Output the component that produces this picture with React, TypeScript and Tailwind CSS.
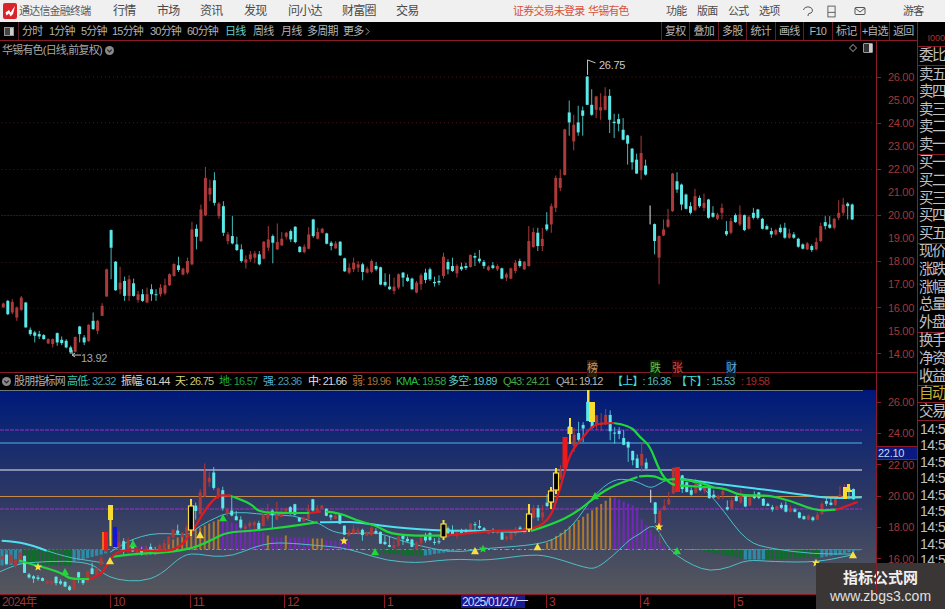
import React from "react";

type Candle = [number, number, number, number, number]; // color (0 red, 1 cyan), wick top, body top, body bottom, wick bottom

// values read at 3x from the reference
const seg1: Candle[] = [
  [0,730,733,745,745],[1,722,725,765,768],[0,720,728,760,765],[0,742,745,775,785],[0,710,715,752,755],[1,728,730,805,805],
  [1,805,812,825,830],[1,815,820,830,850],[1,815,825,832,840],[1,825,828,840,842],[0,838,840,853,855],[0,838,840,855,865],
  [1,820,822,850,860],[1,832,842,852,858],[1,840,845,865,868],[1,860,865,880,885],[0,832,834,878,880],[1,800,802,825,850],
  [1,828,835,850,858],[0,795,797,846,848],[1,760,785,810,812],[0,782,785,815,825],[0,732,740,770,770],[0,628,630,712,712],
  [1,510,512,565,660],[1,605,607,693,695],[0,622,670,690,705],[1,652,665,710,725],[0,648,660,710,725],[1,658,672,710,712],
  [0,695,705,722,730],[1,690,705,725,728],[0,685,705,730,730],[1,675,690,705,725],[1,690,705,708,725],[0,675,685,705,712],
  [0,658,678,702,708],[0,642,645,678,680],[0,612,614,650,652],[1,592,618,632,638],[0,625,628,646,648],[0,595,605,640,645],
  [0,487,510,615,618],[1,495,508,532,570],[0,435,450,545,548],[0,322,355,468,470],[0,360,385,405,425],[1,338,362,430,438],
  [0,428,432,470,478],[1,425,440,520,530],[0,518,525,545,555],[1,470,530,552,555],[1,532,555,572,575],[1,555,570,605,610],
  [0,588,600,610,628],[0,575,585,600,608],[0,575,582,595,612],[1,575,585,615,618],[0,545,547,598,600],[0,500,540,565,575],
  [1,525,530,550,612],[0,492,548,570,572],[0,518,538,558,560],[0,518,520,532,540],[1,510,515,540,548],[1,500,502,548,552],
];
const seg2: Candle[] = [
  [1,590,592,608,610],[0,585,592,608,612],[0,533,555,598,600],[1,508,510,560,565],[0,535,548,568,570],[0,535,538,550,552],
  [1,550,552,583,585],[1,575,580,590,603],[0,575,582,597,598],[1,575,577,618,620],[1,625,627,666,668],[0,642,655,670,675],
  [0,625,640,660,668],[0,635,645,655,668],[1,640,645,668,693],[0,652,658,670,672],[0,630,635,668,672],[1,638,650,660,665],
  [1,652,654,706,708],[1,672,698,708,712],[1,675,712,720,722],[0,685,712,725,735],[0,672,675,715,720],[1,668,670,685,712],
  [1,675,685,695,698],[1,685,688,720,722],[0,695,700,730,732],[0,672,678,705,722],[1,658,670,692,702],[1,655,660,690,695],
  [1,682,698,702,712],[1,678,695,700,708],[0,610,622,680,688],[1,630,638,660,675],[1,625,650,665,668],[0,645,650,672,685],
  [1,640,652,660,665],[1,640,650,656,662],[0,615,617,653,655],[1,610,620,625,650],[1,602,628,636,642],[1,632,638,650,658],
  [0,648,652,662,665],[1,638,648,656,660],[0,645,650,660,665],[1,655,657,688,690],[0,670,675,685,695],[0,655,657,688,690],
  [0,632,640,665,672],[1,628,635,650,655],[0,635,637,660,662],[0,530,575,650,652],[0,535,548,593,595],[1,535,550,590,605],
  [0,535,568,590,605],[1,488,525,540,545],[0,462,470,525,550],[0,378,385,475,488],[0,360,385,415,425],[0,237,239,376,378],
  [1,152,188,218,258],[0,195,225,275,302],[1,168,218,248,258],[1,170,182,198,258],
];
const seg3: Candle[] = [
  [1,78,80,165,165],[1,118,165,195,198],[0,138,140,180,205],[0,130,172,182,210],[0,112,138,180,182],[1,118,138,210,250],
  [1,192,216,220,265],[1,192,208,222,245],[1,205,240,270,272],[1,255,257,282,345],[1,295,297,338,360],[1,312,330,372,372],
  [0,258,310,362,390],[1,330,348,375,378],[2,468,470,525,525],[1,522,524,575,615],[0,558,560,625,705],[0,510,540,558,560],
  [0,478,510,532,535],[0,370,372,485,487],[1,368,395,420,430],[1,402,405,465,482],[1,432,435,478,480],[1,458,470,490,495],
  [0,418,440,482,485],[1,438,445,470,475],[0,432,460,475,485],[1,448,450,505,508],[1,470,490,502,505],[0,490,495,508,512],
  [0,462,475,490,510],[1,515,545,555,560],[0,505,515,550,555],[1,492,497,518,520],[0,468,495,525,530],[1,495,497,542,545],
  [0,498,502,538,540],[1,475,490,505,510],[1,478,480,505,510],[1,505,508,538,540],[1,525,530,540,540],[1,535,545,555,565],
  [0,538,542,555,558],[1,525,535,548,552],[1,520,535,565,568],[0,538,552,565,568],[1,548,555,565,568],[1,565,568,592,595],
  [1,582,585,598,600],[0,578,582,600,602],[1,585,590,602,608],[0,565,578,600,603],[0,520,530,575,578],[1,500,518,530,540],
  [1,500,525,535,538],[0,505,508,535,540],[0,452,490,505,512],[0,445,465,490,498],[1,458,462,470,510],[1,462,465,510,512],
];

const toReal = (seg: Candle[], base: number): Candle[] =>
  seg.map(([c, a, b, d, e]) => [c, base + a / 3, base + b / 3, base + d / 3, base + e / 3]);

const candles = [...toReal(seg1, 60), ...toReal(seg2, 50), ...toReal(seg3, 50)];
const cx = (i: number) => 2 + i * 4.505;
const lower = (y: number) => 403 + (y - 77) * 0.68;

type P = [number, number];
const z = (off: number, pts: P[]): P[] => pts.map(([x, y]) => [off + x / 3, 390 + y / 3]);

const smooth = (pts: P[]) => {
  let d = `M${pts[0][0].toFixed(1)} ${pts[0][1].toFixed(1)}`;
  for (let i = 1; i < pts.length - 1; i++) {
    const mx = (pts[i][0] + pts[i + 1][0]) / 2;
    const my = (pts[i][1] + pts[i + 1][1]) / 2;
    d += ` Q${pts[i][0].toFixed(1)} ${pts[i][1].toFixed(1)} ${mx.toFixed(1)} ${my.toFixed(1)}`;
  }
  const last = pts[pts.length - 1];
  return d + ` L${last[0].toFixed(1)} ${last[1].toFixed(1)}`;
};

const thinLines: P[][] = [
  z(0, [[140,485],[200,505],[270,515],[310,522]]),
  [
    ...z(0, [[330,490],[370,465],[400,450],[450,435],[500,433],[550,438],[570,435],[600,410],[650,385],[680,372],[740,370],[800,378],[880,378],[950,402]]),
    ...z(320, [[0,405],[50,435],[130,432],[180,432],[250,458],[350,482],[420,490],[500,478],[620,470],[700,455],[760,410],[820,320],[880,270],[930,272]]),
    ...z(640, [[0,282],[35,300],[70,275],[120,265],[180,285],[240,350],[320,460],[400,480],[520,495],[640,495]]),
  ],
  [
    ...z(0, [[0,548],[50,525],[100,520],[200,515],[280,525],[310,555],[350,572],[420,578],[480,560],[550,495],[600,495],[640,503],[700,500],[760,475],[810,462],[860,462],[900,465],[960,470]]),
    ...z(320, [[60,475],[120,490],[200,515],[290,522],[350,515],[420,510],[500,515],[640,495],[700,505],[800,538],[830,538],[880,500],[930,450]]),
    ...z(640, [[0,435],[30,410],[50,415],[80,470],[110,500],[160,530],[210,547],[270,535],[320,512],[400,518],[530,520],[640,497]]),
  ],
];

const cyanLines: P[][] = [
  z(0, [[5,455],[50,458],[100,470],[140,485]]),
  z(320, [[0,400],[60,398],[120,400],[180,410],[260,418],[340,424],[400,425],[500,425],[580,428],[620,425]]),
  z(640, [[110,268],[180,278],[280,290],[400,305],[520,322],[580,328],[665,325]]),
];

const greenLines: P[][] = [
  z(0, [[60,515],[110,530],[150,540],[190,555],[210,570],[270,570]]),
  z(0, [[690,320],[750,340],[775,370],[850,372],[930,372]]),
  z(320, [[20,368],[60,372],[110,395],[170,410],[210,435],[290,440],[360,440]]),
  [
    ...z(320, [[880,102],[930,108],[960,145]]),
    ...z(640, [[30,170],[60,250],[90,285],[120,290],[220,295],[260,300],[300,320],[380,318],[450,335],[500,355],[540,365],[585,362]]),
  ],
  z(0, [[340,503],[400,495],[500,490],[580,478],[640,450],[680,430],[760,425],[850,415],[950,400]]),
  z(320, [[635,425],[700,405],[770,370],[830,320],[880,290],[950,265]]),
  z(640, [[0,262],[40,258],[70,275],[110,268],[180,280],[220,295]]),
];

const redLines: P[][] = [
  z(0, [[270,570],[300,560],[320,530],[340,495],[370,485],[400,480],[470,488],[530,482],[570,440],[610,370],[650,318],[690,320]]),
  z(0, [[930,372],[960,368]]),
  z(320, [[370,440],[450,432],[530,425],[625,425],[690,395],[720,300],[750,190],[790,145],[820,105],[880,102]]),
  z(640, [[590,362],[650,340]]),
];

// histogram: from index, to index, colour, start height, end height (minus = below the base)
const histSegs: [number, number, string, number, number][] = [
  [0,4,"#2d8ba5",-16,-15],[5,15,"#0c6e28",-15,-16],[16,23,"#2d8ba5",-12,-4],[30,33,"#7a24c0",3,4],
  [35,48,"#b0782c",4,30],[49,58,"#7a24c0",30,17],[59,59,"#b0782c",14,14],[60,62,"#7a24c0",12,12],[63,63,"#b0782c",14,14],
  [64,68,"#7a24c0",12,12],[69,71,"#b0782c",11,11],[72,77,"#7a24c0",9,8],[83,93,"#0c6e28",-3,-7],[94,101,"#2d8ba5",-6,-1],
  [121,135,"#b0782c",7,52],[136,141,"#7a24c0",52,42],[142,147,"#7a24c0",30,3],[155,164,"#0c6e28",-1,-9],[165,169,"#2d8ba5",-10,-10],
  [170,181,"#0c6e28",-10,-8],[182,190,"#2d8ba5",-8,-1],
];
const histBars = histSegs.flatMap(([a, b, color, h0, h1]) => {
  const out: { i: number; color: string; h: number }[] = [];
  for (let i = a; i <= b; i++) out.push({ i, color, h: b === a ? h0 : h0 + ((h1 - h0) * (i - a)) / (b - a) });
  return out;
});

const starPts = (x: number, y: number, r: number) => {
  const pts: string[] = [];
  for (let i = 0; i < 10; i++) {
    const rr = i % 2 ? r * 0.42 : r;
    const a = -Math.PI / 2 + (i * Math.PI) / 5;
    pts.push(`${(x + rr * Math.cos(a)).toFixed(1)},${(y + rr * Math.sin(a)).toFixed(1)}`);
  }
  return pts.join(" ");
};
const triPts = (x: number, y: number, r: number) => `${x},${y - r} ${x + r},${y + r * 0.8} ${x - r},${y + r * 0.8}`;

const upperTicks = ["26.00","25.00","24.00","23.00","22.00","21.00","20.00","19.00","18.00","17.00","16.00","15.00","14.00"];
const lowerTicks = ["26.00","24.00","22.00","20.00","18.00","16.00"];
const timeTabs: [string, string][] = [
  ["分时","w-[27px]"],["1分钟","w-[32px]"],["5分钟","w-[31px]"],["15分钟","w-[38px]"],["30分钟","w-[37px]"],["60分钟","w-[38px]"],
];
const timeTabs2: [string, string][] = [["周线","w-[28px]"],["月线","w-[26px]"],["多周期","w-[36px]"]];
const tools = ["复权","叠加","多股","统计","画线","F10","标记","+自选","返回"];
const menus: [string, string][] = [
  ["行情","w-[44px]"],["市场","w-[43px]"],["资讯","w-[44px]"],["发现","w-[44px]"],["问小达","w-[54px]"],["财富圈","w-[54px]"],["交易","w-[40px]"],
];
const sideGroups = [
  ["委比"],
  ["卖五","卖四","卖三","卖二","卖一"],
  ["买一","买二","买三","买四","买五"],
  ["现价","涨跌","涨幅","总量","外盘"],
  ["换手","净资","收益"],
];
const stats: { l: string; v: string; lc: string; vc: string; w: string }[] = [
  { l: "高低", v: "32.32", lc: "text-[#35c8b0]", vc: "text-[#4aa3ae]", w: "w-[54px]" },
  { l: "振幅", v: "61.44", lc: "text-[#d8d8d8]", vc: "text-[#d0d0d0]", w: "w-[54px]" },
  { l: "天", v: "26.75", lc: "text-[#d8d878]", vc: "text-[#c8c878]", w: "w-[44px]" },
  { l: "地", v: "16.57", lc: "text-[#1fb83c]", vc: "text-[#1fa040]", w: "w-[44px]" },
  { l: "强", v: "23.36", lc: "text-[#4fb4e4]", vc: "text-[#4a98b8]", w: "w-[45px]" },
  { l: "中", v: "21.66", lc: "text-[#e8e8e8]", vc: "text-[#d8d8d8]", w: "w-[44px]" },
  { l: "弱", v: "19.96", lc: "text-[#b87830]", vc: "text-[#a87038]", w: "w-[44px]" },
  { l: "KMA", v: "19.58", lc: "text-[#28c048]", vc: "text-[#2cae4c]", w: "w-[52px]" },
  { l: "多空", v: "19.89", lc: "text-[#58d0d0]", vc: "text-[#58c8c8]", w: "w-[55px]" },
  { l: "Q43", v: "24.21", lc: "text-[#4aa84a]", vc: "text-[#4aa04a]", w: "w-[53px]" },
  { l: "Q41", v: "19.12", lc: "text-[#a8a8a8]", vc: "text-[#b8b8b8]", w: "w-[56px]" },
  { l: "【上】", v: "16.36", lc: "text-[#38e0e0]", vc: "text-[#58b8b8]", w: "w-[64px]" },
  { l: "【下】", v: "15.53", lc: "text-[#38e0e0]", vc: "text-[#58b8b8]", w: "w-[65px]" },
];
const months: [string, string][] = [["10","w-[80px]"],["11","w-[94px]"],["12","w-[100px]"],["1","w-[77px]"]];
const months2: [string, string][] = [["3","w-[94px]"],["4","w-[94px]"],["5","w-[60px]"]];

const Wicks = ({ map }: { map: (y: number) => number }) => (
  <>
    {candles.map(([c, a, b, d, e], i) => {
      const color = c === 0 ? "#ad3a3a" : c === 1 ? "#5ae8e8" : "#e8e8e8";
      const x = cx(i);
      return (
        <g key={i}>
          <line x1={x} x2={x} y1={map(a)} y2={map(e)} stroke={color} strokeWidth={1} opacity={c === 1 ? 0.8 : 1} />
          {c !== 2 && <rect x={x - 1.5} y={map(b)} width={3} height={Math.max(map(d) - map(b), 1)} fill={color} />}
        </g>
      );
    })}
  </>
);

const HollowMark = ({ x, t, b1, b2, e }: { x: number; t: number; b1: number; b2: number; e: number }) => (
  <>
    <line x1={x} x2={x} y1={t} y2={e} stroke="#f6dc3c" strokeWidth={2} />
    <rect x={x - 2.5} y={b1} width={5} height={b2 - b1} fill="#000" stroke="#f6dc3c" strokeWidth={1.2} />
  </>
);

const Solid = ({ x, y, w, h, c }: { x: number; y: number; w: number; h: number; c: string }) => (
  <rect x={x} y={y} width={w} height={h} fill={c} />
);

export default function App() {
  return (
    <div className="relative w-[945px] h-[609px] overflow-hidden bg-black flex flex-col text-[11px] tracking-[-0.8px] [font-family:'Liberation_Sans','Noto_Sans_CJK_SC',sans-serif]">
      {/* title bar */}
      <div className="h-[22px] shrink-0 bg-[#f0f0f0] text-[#4a4a4a] flex items-center">
        <svg viewBox="0 0 14 16" className="w-[14px] h-[16px] ml-[3px] shrink-0">
          <rect width="14" height="16" rx="2" fill="#d9252a" />
          <path d="M2.5 9.5 L6 7 L7.5 9.5 L12 3 L10 11 L7.5 13.5 L6 10.5 L3.5 12.5 Z" fill="#fff" />
        </svg>
        <span className="ml-[2px] w-[94px] text-[#5a5a5a]">通达信金融终端</span>
        {menus.map(([m, w]) => (
          <span key={m} className={`${w} text-[12px]`}>{m}</span>
        ))}
        <span className="ml-[77px] w-[75px] text-[#d8503c]">证券交易未登录</span>
        <span className="w-[78px] text-[#d8503c]">华锡有色</span>
        {["功能","版面","公式","选项"].map((m) => (
          <span key={m} className="w-[31px]">{m}</span>
        ))}
        <svg viewBox="0 0 12 12" className="w-[12px] h-[12px] ml-[12px]" fill="none" stroke="#555" strokeWidth="1">
          <path d="M1.5 5 A4.5 3.5 0 1 1 9 8 L7 8.5 M6.5 8.5 L6 11" />
        </svg>
        <svg viewBox="0 0 10 14" className="w-[9px] h-[13px] ml-[13px]" fill="none" stroke="#555" strokeWidth="1">
          <rect x="1" y="1" width="8" height="12" />
          <path d="M1 8 H9" />
        </svg>
        <svg viewBox="0 0 12 10" className="w-[12px] h-[10px] ml-[18px]" fill="none" stroke="#555" strokeWidth="1">
          <rect x="1" y="1.5" width="10" height="7" rx="1" />
          <path d="M1 2 L6 6 L11 2" />
        </svg>
        <span className="ml-[37px]">游客</span>
      </div>

      <div className="flex flex-1 min-h-0">
        {/* left: toolbar and chart panes */}
        <div className="w-[917px] shrink-0 flex flex-col">
          <div className="h-[19px] shrink-0 flex items-center border-b border-[#8a1c2a] text-[#b4b4b4]">
            <div className="w-[19px] h-full flex items-center justify-center border-r border-[#5a1c24]">
              <span className="w-[10px] h-[9px] border border-[#999] bg-[#444] flex justify-end">
                <span className="w-[3px] h-full bg-[#ccc]" />
              </span>
            </div>
            <div className="flex ml-[3px]">
              {timeTabs.map(([t, w]) => (
                <span key={t} className={w}>{t}</span>
              ))}
              <span className="w-[28px] text-[#5fd0c8]">日线</span>
              {timeTabs2.map(([t, w]) => (
                <span key={t} className={w}>{t}</span>
              ))}
              <span className="flex items-center gap-[2px]">
                更多
                <svg viewBox="0 0 6 10" className="w-[5px] h-[9px]" fill="none" stroke="#b4b4b4"><path d="M1 1 L5 5 L1 9" /></svg>
              </span>
            </div>
            <div className="ml-auto flex h-full">
              {tools.map((t) => (
                <span key={t} className="w-[28.5px] flex items-center justify-center border-l border-[#6a1c26]">{t}</span>
              ))}
            </div>
          </div>

          {/* upper pane */}
          <div className="h-[332px] shrink-0 flex border-b border-[#8a1c2a]">
            <div className="w-[876px] relative">
              <svg viewBox="0 41 876 332" className="w-full h-full block">
                {[77,123,170,216,263,309,354].map((y) => (
                  <line key={y} x1="0" x2="876" y1={y} y2={y} stroke={y === 216 ? "#4c1414" : "#561616"} strokeDasharray={y === 216 ? "2 1" : "1 3"} />
                ))}
                <Wicks map={(y) => y} />
                <path d="M588 75 V60 L596 63" fill="none" stroke="#c8c8c8" />
                <path d="M71 351 V355 M71 356 H80 M71 356 L74 354 M71 356 L74 358" fill="none" stroke="#c8c8c8" />
              </svg>
              <div className="absolute left-[2px] top-[1px] flex items-center text-[#a8a8a8] gap-[3px]">
                <span>华锡有色(日线,前复权)</span>
                <span className="w-[9px] h-[9px] rounded-full bg-[#8a8a8a] flex items-center justify-center">
                  <svg viewBox="0 0 8 8" className="w-[7px] h-[7px]" fill="none" stroke="#222" strokeWidth="1.4"><path d="M1.5 3 L4 5.5 L6.5 3" /></svg>
                </span>
              </div>
              <div className="absolute right-[3px] top-[2px] flex items-center gap-[7px]">
                <span className="w-[6px] h-[6px] rotate-45 border border-[#777]" />
                <span className="w-[10px] h-[10px] border border-[#999] rounded-[1px] bg-[#333] flex justify-end">
                  <span className="w-[3px] h-full bg-[#ccc]" />
                </span>
              </div>
              <span className="absolute left-[599px] top-[16px] text-[#c8c8c8] tracking-[-0.3px]">26.75</span>
              <span className="absolute left-[81px] top-[309px] text-[#a8a8a8] tracking-[-0.3px]">13.92</span>
              <span className="absolute left-[587px] top-[319px] text-[#c89060] bg-[#2a1a08]">榜</span>
              <span className="absolute left-[650px] top-[319px] text-[#60c040] bg-[#0a2208]">跌</span>
              <span className="absolute left-[672px] top-[319px] text-[#d05050] bg-[#2a0808]">张</span>
              <span className="absolute left-[726px] top-[319px] text-[#60a8d8] bg-[#081a2a]">财</span>
            </div>
            <div className="w-[41px] border-l border-[#8a1c2a] pt-[24.5px] text-[#a03838] tracking-[-0.3px]">
              {upperTicks.map((t, i) => (
                <div key={t} className="h-[23.08px] flex items-center justify-between pr-[3px]">
                  <span className={i % 2 ? "w-[4px] h-px" : "w-[4px] h-px bg-[#8a1c2a]"} />
                  {t}
                </div>
              ))}
            </div>
          </div>

          {/* indicator header */}
          <div className="h-[17px] shrink-0 flex">
            <div className="w-[876px] flex items-center pl-[2px] text-[#b0b0b0]">
              <span className="w-[9px] h-[9px] rounded-full bg-[#8a8a8a] flex items-center justify-center shrink-0">
                <svg viewBox="0 0 8 8" className="w-[7px] h-[7px]" fill="none" stroke="#222" strokeWidth="1.4"><path d="M1.5 3 L4 5.5 L6.5 3" /></svg>
              </span>
              <span className="ml-[3px] w-[53px] shrink-0">股朋指标网</span>
              {stats.map((s) => (
                <span key={s.l} className={`${s.w} shrink-0 whitespace-nowrap`}>
                  <span className={s.lc}>{s.l}</span>
                  <span className={s.vc}>:{" "}{s.v}</span>
                </span>
              ))}
              <span className="text-[#a82828]">: 19.58</span>
            </div>
            <div className="w-[41px] border-l border-[#8a1c2a]" />
          </div>

          {/* indicator pane */}
          <div className="h-[204px] shrink-0 flex">
            <div className="w-[876px] bg-linear-to-b from-[#00177a] via-[#2b3664] to-[#57575c]">
              <svg viewBox="0 391 876 204" className="w-full h-full block">
                <line x1="0" x2="863" y1="391" y2="391" stroke="#d8d878" strokeWidth="1.2" />
                <line x1="0" x2="862" y1="431" y2="431" stroke="#9a30c8" strokeDasharray="4 1" />
                <line x1="0" x2="862" y1="444" y2="444" stroke="#4fb6e0" />
                <line x1="0" x2="862" y1="471" y2="471" stroke="#ececf4" />
                <line x1="0" x2="862" y1="497.5" y2="497.5" stroke="#c88a48" />
                <line x1="0" x2="862" y1="510" y2="510" stroke="#a030c8" strokeDasharray="4 1" />
                <line x1="0" x2="862" y1="550.5" y2="550.5" stroke="#9060a0" strokeDasharray="2 2" />
                <line x1="140" x2="820" y1="550.5" y2="550.5" stroke="#c8a040" strokeDasharray="2 4" />
                {histBars.map((b) => {
                  const w = b.h > 0 ? 2 : 3.2;
                  return <rect key={b.i} x={cx(b.i) - w / 2} y={b.h > 0 ? 550.5 - b.h : 550.5} width={w} height={Math.abs(b.h)} fill={b.color} />;
                })}
                <line x1="685" x2="862" y1="550.5" y2="550.5" stroke="#28b040" strokeDasharray="3 1" />
                {thinLines.map((p, i) => (
                  <path key={i} d={smooth(p)} fill="none" stroke="#4cc0c8" strokeWidth="1" />
                ))}
                <Wicks map={lower} />
                {cyanLines.map((p, i) => (
                  <path key={i} d={smooth(p)} fill="none" stroke="#4ee0f0" strokeWidth="2" />
                ))}
                {greenLines.map((p, i) => (
                  <path key={i} d={smooth(p)} fill="none" stroke="#1fd83c" strokeWidth="2.2" strokeLinecap="round" />
                ))}
                {redLines.map((p, i) => (
                  <path key={i} d={smooth(p)} fill="none" stroke="#e01a22" strokeWidth="2.2" strokeLinecap="round" />
                ))}
                <Solid x={102} y={533} w={2.5} h={18} c="#e07020" />
                <Solid x={104} y={533} w={4} h={18} c="#f01818" />
                <Solid x={108} y={506} w={5} h={15} c="#f8dc30" />
                <line x1="110.5" x2="110.5" y1="521" y2="547" stroke="#f8dc30" strokeWidth="2" />
                <Solid x={113} y={528} w={4} h={20} c="#1414e0" />
                <HollowMark x={191} t={500} b1={507} b2={531} e={537} />
                <HollowMark x={443.5} t={521} b1={525} b2={538} e={541} />
                <HollowMark x={529} t={505} b1={515} b2={530} e={533} />
                <HollowMark x={551} t={488} b1={492} b2={503} e={510} />
                <HollowMark x={556} t={469} b1={474} b2={491} e={495} />
                <Solid x={562.5} y={438} w={5} h={31} c="#f01818" />
                <Solid x={567.5} y={428} w={5} h={7} c="#f8dc30" />
                <line x1="570" x2="570" y1="419" y2="445" stroke="#f8dc30" strokeWidth="2" />
                <Solid x={589} y={403} w={6} h={20} c="#f8dc30" />
                <Solid x={587} y={391} w={2.5} h={12} c="#f8dc30" />
                <Solid x={675} y={468} w={5} h={25} c="#f01818" />
                <Solid x={843} y={488} w={4} h={12} c="#f8dc30" />
                <Solid x={847} y={485} w={3} h={8} c="#f8dc30" />
                <path d="M846 492 H852" stroke="#f8dc30" strokeWidth="2" />
                {[[110,562],[200,536],[475,552],[537.5,548],[853,556]].map(([x, y]) => (
                  <polygon key={x} points={triPts(x, y, 4)} fill="#f8e040" />
                ))}
                {[[65,573],[133,545],[223,519],[375,553],[595,497],[677,552]].map(([x, y]) => (
                  <polygon key={x} points={triPts(x, y, 4)} fill="#20d838" />
                ))}
                <polygon points={starPts(483,550,4.5)} fill="#20d838" />
                {[[38,568],[344,542],[659,528],[816,564]].map(([x, y]) => (
                  <polygon key={x} points={starPts(x, y, 4.5)} fill="#f8e040" />
                ))}
              </svg>
            </div>
            <div className="w-[41px] border-l border-[#8a1c2a] -mt-[3.7px] text-[#a03838] tracking-[-0.3px] relative z-10">
              {lowerTicks.map((t) => (
                <div key={t} className="h-[31.4px] flex items-center justify-between pr-[3px]">
                  <span className="w-[4px] h-px bg-[#8a1c2a]" />
                  {t}
                </div>
              ))}
              <div className="absolute left-0 right-0 top-[59.5px] h-[14px] bg-[#0a1a80] border-y border-[#8a1c2a] text-[#c8d8f0] flex items-center pl-[1px] text-[11px]">22.10</div>
            </div>
          </div>

          {/* date axis */}
          <div className="h-[14px] shrink-0 border-t border-[#8a1c2a] flex items-center text-[#a03838] text-[12px]">
            <div className="w-[876px] flex items-center h-full">
              <span className="w-[110px] shrink-0 pl-[2px]">2024年</span>
              {months.map(([m, w]) => (
                <span key={m} className={`${w} shrink-0 h-full border-l border-[#8a1c2a] pl-[2px] flex items-center`}>{m}</span>
              ))}
              <span className="w-[64px] shrink-0 h-full bg-[#1a1a90] text-[#d8d8f8] flex items-center pl-[1px] whitespace-nowrap">2025/01/27/一</span>
              <span className="w-[21px] shrink-0" />
              {months2.map(([m, w]) => (
                <span key={m} className={`${w} shrink-0 h-full border-l border-[#8a1c2a] pl-[2px] flex items-center`}>{m}</span>
              ))}
            </div>
          </div>
        </div>

        {/* right quote strip */}
        <div className="flex-1 border-l border-[#8a1c2a] text-[#c0c0c0] text-[14.5px] tracking-[-1.5px] flex flex-col overflow-hidden">
          <div className="h-[24px] shrink-0 flex items-end justify-end pb-[1px] text-[#b03030] text-[9px] tracking-normal">I000</div>
          {sideGroups.map((g, i) => (
            <div key={i} className="shrink-0 border-t border-[#8a1c2a]">
              {g.map((t) => (
                <div key={t} className="h-[17.6px] flex items-center whitespace-nowrap pl-[1px]">{t}</div>
              ))}
            </div>
          ))}
          <div className="h-[17px] shrink-0 border-t border-[#8a1c2a] flex items-center whitespace-nowrap pl-[1px] text-[#c8b038]">自动</div>
          <div className="h-[18px] shrink-0 border-t border-[#8a1c2a] flex items-center whitespace-nowrap pl-[1px]">交易</div>
          <div className="shrink-0 border-t border-[#8a1c2a] tracking-[-0.5px]">
            {[0,1,2,3,4,5,6,7,8,9].map((i) => (
              <div key={i} className="h-[16.4px] flex items-center whitespace-nowrap pl-[2px] text-[14px]">14:56</div>
            ))}
          </div>
        </div>
      </div>

      {/* site watermark over the corner */}
      <div className="absolute left-[816px] top-[563px] w-[129px] h-[46px] bg-[#3a3636] flex flex-col items-center justify-center text-[#f0f0f0] tracking-normal">
        <span className="text-[15px] font-bold leading-[21px]">指标公式网</span>
        <span className="text-[14px] leading-[17px] text-[#e0e0e0]">www.zbgs3.com</span>
      </div>
    </div>
  );
}
